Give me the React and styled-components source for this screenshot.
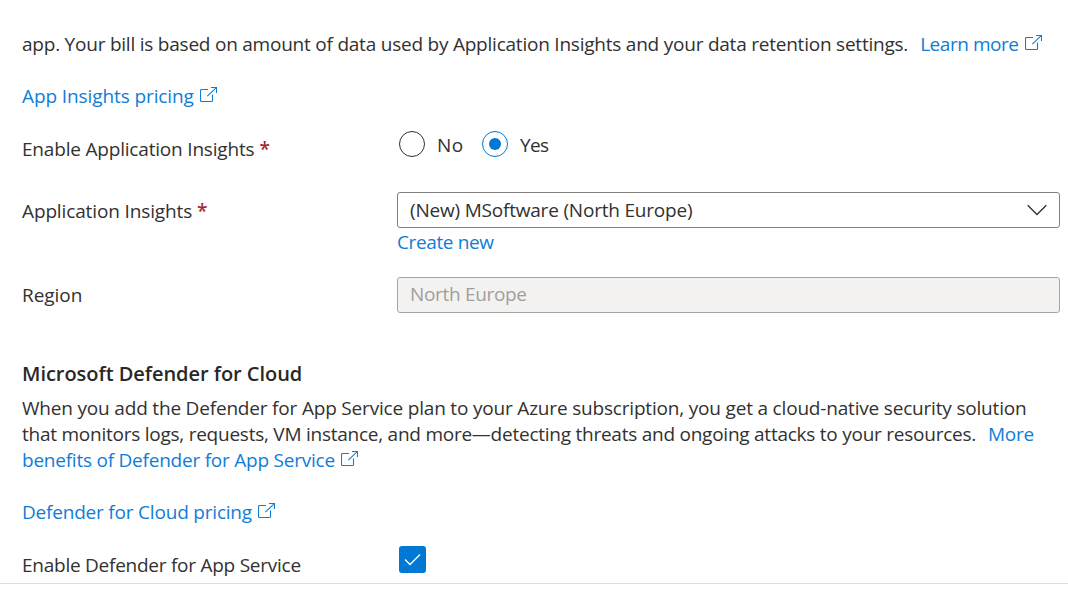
import React from "react";
import styled, { createGlobalStyle } from "styled-components";

const GlobalStyle = createGlobalStyle`
  * { box-sizing: border-box; }
  html, body { margin: 0; background: #fff; overflow: hidden; }
`;

const Page = styled.main`
  height: 593px;
  color: #323130;
  font-family: "Open Sans", "Segoe UI", sans-serif;
  font-size: 19px;
  line-height: 26px;
  white-space: nowrap;
`;

const Form = styled.div`
  height: 584px;
  padding: 31px 8px 0 22px;
  border-bottom: 1px solid #e1dfdd;
`;

const Text = styled.span`
  letter-spacing: ${({ $track = 0 }) => $track}px;
`;

const Paragraph = styled.p`
  margin: 0;
`;

const Line = styled.span`
  display: flex;
  align-items: center;
  height: 26px;
`;

const HelpLine = styled(Line)`
  margin-top: 1px;
`;

const Link = styled.a`
  display: inline-flex;
  align-items: center;
  margin-left: ${({ $indent = 0 }) => $indent}px;
  color: #0f7dd6;
  letter-spacing: ${({ $track = 0 }) => $track}px;
  text-decoration: none;
  cursor: pointer;
`;

const LinkLine = styled(Line)`
  margin-top: 26px;
`;

const ExternalSvg = styled.svg`
  flex: none;
  width: 17px;
  height: 17px;
  margin: 0 0 4px ${({ $gap = 5 }) => $gap}px;
  fill: none;
  stroke: #0f7dd6;
  stroke-width: 1.1;
`;

const Heading = styled.h2`
  margin: 48px 0 8px;
  color: #292827;
  font-size: 20px;
  font-weight: 600;
  letter-spacing: -0.04px;
  line-height: 26px;
`;

const Field = styled.div`
  display: grid;
  grid-template-columns: 375px 1fr;
  align-items: start;
  margin-top: ${({ $top }) => $top}px;
`;

const Label = styled.label`
  padding-top: ${({ $drop = 6 }) => $drop}px;
  letter-spacing: ${({ $track = 0 }) => $track}px;
`;

const Required = styled.span`
  margin-left: 5px;
  color: #a4262c;
  font-family: "Noto Sans", sans-serif;
  font-size: 19px;
  font-weight: 500;
  line-height: 20px;
`;

const RadioGroup = styled.div`
  display: flex;
  align-items: center;
  height: 26px;
  padding-left: 2px;
`;

const Radio = styled.span`
  display: flex;
  align-items: center;
  justify-content: center;
  width: 26px;
  height: 26px;
  border: 1px solid ${({ $checked }) => ($checked ? "#0078d4" : "#323130")};
  border-radius: 50%;

  &::after {
    content: "";
    width: 12px;
    height: 12px;
    border-radius: 50%;
    background: ${({ $checked }) => ($checked ? "#0078d4" : "transparent")};
  }
`;

const RadioLabel = styled.span`
  width: 57px;
  padding: 2px 0 0 12px;
  letter-spacing: ${({ $track = 0 }) => $track}px;
`;

const Box = styled.div`
  display: flex;
  align-items: center;
  justify-content: space-between;
  height: 36px;
  padding: 0 12px;
  border: 1px solid ${({ $disabled }) => ($disabled ? "#a6a5a4" : "#82807f")};
  border-radius: 3px;
  background: ${({ $disabled }) => ($disabled ? "#f3f2f1" : "#fff")};
  color: ${({ $disabled }) => ($disabled ? "#a19f9d" : "#323130")};
  letter-spacing: ${({ $disabled }) => ($disabled ? -0.32 : -0.2)}px;
`;

const BoxText = styled.span`
  padding-bottom: ${({ $lift = 0 }) => $lift}px;
`;

const ChevronSvg = styled.svg`
  width: 20px;
  height: 12px;
  fill: none;
  stroke: #323130;
  stroke-width: 1.3;
`;

const Checkbox = styled.span`
  display: flex;
  align-items: center;
  justify-content: center;
  width: 27px;
  height: 27px;
  margin-left: 2px;
  border-radius: 3px;
  background: #0078d4;
`;

const CheckSvg = styled.svg`
  width: 17px;
  height: 13px;
  margin-bottom: 1px;
  fill: none;
  stroke: #fff;
  stroke-width: 1.3;
`;

const External = ({ gap }) => (
  <ExternalSvg viewBox="0 0 17 17" $gap={gap}>
    <path d="M8 3.5H1.5Q.5 3.5 .5 4.5V14.5Q.5 15.5 1.5 15.5H11.5Q12.5 15.5 12.5 14.5V8.5" />
    <path d="M11 1.5H16.5V7M16.3 1.7L7.3 10.2" />
  </ExternalSvg>
);

export default function App() {
  return (
    <Page>
      <GlobalStyle />
      <Form>
        <Paragraph>
          <Line>
            <Text $track={-0.225}>
              app. Your bill is based on amount of data used by Application Insights and your data retention settings.
            </Text>
            <Link $indent={12} $track={-0.45}>Learn more<External gap={6} /></Link>
          </Line>
        </Paragraph>
        <LinkLine><Link $track={-0.1}>App Insights pricing<External gap={6} /></Link></LinkLine>

        <Field $top={22}>
          <Label $drop={5} $track={-0.19}>Enable Application Insights<Required>*</Required></Label>
          <RadioGroup>
            <Radio />
            <RadioLabel $track={0.5}>No</RadioLabel>
            <Radio $checked />
            <RadioLabel $track={-0.7}>Yes</RadioLabel>
          </RadioGroup>
        </Field>

        <Field $top={30}>
          <Label $track={-0.13}>Application Insights<Required>*</Required></Label>
          <div>
            <Box>
              <BoxText>(New) MSoftware (North Europe)</BoxText>
              <ChevronSvg viewBox="0 0 20 12"><path d="M.7 1.2L10 10.5L19.3 1.2" /></ChevronSvg>
            </Box>
            <HelpLine><Link $track={-0.38}>Create new</Link></HelpLine>
          </div>
        </Field>

        <Field $top={22}>
          <Label $drop={5} $track={-0.05}>Region</Label>
          <Box $disabled><BoxText $lift={2}>North Europe</BoxText></Box>
        </Field>

        <Heading>Microsoft Defender for Cloud</Heading>
        <Paragraph>
          <Line>
            <Text $track={-0.185}>
              When you add the Defender for App Service plan to your Azure subscription, you get a cloud-native security solution
            </Text>
          </Line>
          <Line>
            <Text $track={-0.245}>
              that monitors logs, requests, VM instance, and more—detecting threats and ongoing attacks to your resources.
            </Text>
            <Link $indent={12} $track={-0.3}>More</Link>
          </Line>
          <Line><Link $track={-0.23}>benefits of Defender for App Service<External gap={6} /></Link></Line>
        </Paragraph>
        <LinkLine><Link $track={-0.2}>Defender for Cloud pricing<External gap={6} /></Link></LinkLine>

        <Field $top={21}>
          <Label $track={-0.25}>Enable Defender for App Service</Label>
          <Checkbox>
            <CheckSvg viewBox="0 0 17 13"><path d="M1 6.5L6 11.5L16 1.5" /></CheckSvg>
          </Checkbox>
        </Field>
      </Form>
    </Page>
  );
}
